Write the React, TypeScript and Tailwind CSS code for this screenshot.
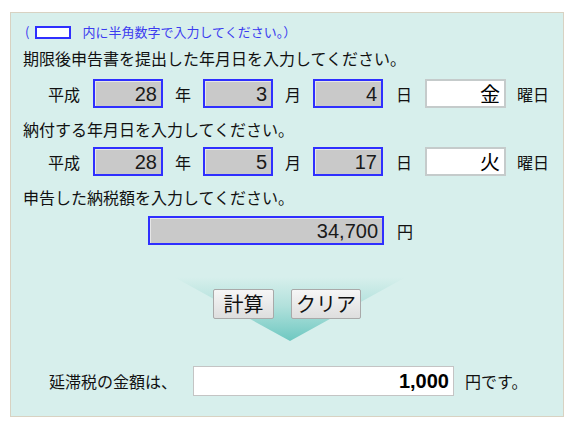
const jp = { fontFamily: '"Noto Sans CJK JP", "Liberation Sans", sans-serif' };
const num = { fontFamily: '"Liberation Sans", Arial, sans-serif' };

function NumBox({ value, width = 'w-[70px]' }: { value: string; width?: string }) {
	return (
		<div className={`${width} h-[29px] border-2 border-[#2f2fff] bg-[#c9c9c9] shadow-[inset_1px_1px_0_#e6e6e6] flex items-center justify-end pr-[4px] text-[20px] text-[#1a1a1a]`} style={num}>
			{value}
		</div>
	);
}

function DayBox({ value }: { value: string }) {
	return (
		<div className="w-[81px] h-[29px] border-2 border-[#c5cbcb] bg-white flex items-center justify-end pr-[4px] text-[20px] text-black" style={jp}>
			{value}
		</div>
	);
}

function DateRow({ y, m, d, w }: { y: string; m: string; d: string; w: string }) {
	return (
		<div className="flex items-center h-[29px] text-[16px] text-[#111]">
			<div className="w-[82px] pl-[37px]">平成</div>
			<NumBox value={y} />
			<div className="w-[40px] text-center">年</div>
			<NumBox value={m} />
			<div className="w-[40px] text-center">月</div>
			<NumBox value={d} />
			<div className="w-[42px] text-center">日</div>
			<DayBox value={w} />
			<div className="ml-[11px]">曜日</div>
		</div>
	);
}

export default function App() {
	return (
		<div className="w-[574px] h-[427px] bg-white pt-[12px] pl-[10px]" style={jp}>
			<div className="w-[554px] h-[405px] border border-[#d8d2c2] bg-[#d7efec] flex flex-col">
				<div className="h-[20px] mt-[9px] ml-[14px] flex items-center text-[13px] text-[#3b3bf0]">
					<span>(</span>
					<span className="w-[36px] h-[13px] border-2 border-[#2f2fff] bg-white ml-[6px]" />
					<span className="ml-[11px]">内に半角数字で入力してください。）</span>
				</div>
				<div className="h-[22px] mt-[5px] ml-[12px] flex items-center text-[16px] text-[#111]">期限後申告書を提出した年月日を入力してください。</div>
				<div className="mt-[10px]">
					<DateRow y="28" m="3" d="4" w="金" />
				</div>
				<div className="h-[22px] mt-[10px] ml-[12px] flex items-center text-[16px] text-[#111]">納付する年月日を入力してください。</div>
				<div className="mt-[7px]">
					<DateRow y="28" m="5" d="17" w="火" />
				</div>
				<div className="h-[22px] mt-[10px] ml-[12px] flex items-center text-[16px] text-[#111]">申告した納税額を入力してください。</div>
				<div className="mt-[8px] flex items-center h-[29px] text-[16px] text-[#111]">
					<div className="ml-[137px]">
						<NumBox value="34,700" width="w-[236px]" />
					</div>
					<div className="ml-[13px]">円</div>
				</div>
				<div className="relative h-[108px] mt-[7px]">
					<svg className="absolute left-[163px] top-[25px]" width="232" height="70" viewBox="0 0 232 70">
						<defs>
							<linearGradient id="fun" x1="0" y1="0" x2="0" y2="1">
								<stop offset="0" stopColor="#d7efec" />
								<stop offset="0.45" stopColor="#b2e1dc" />
								<stop offset="1" stopColor="#6ec8c1" />
							</linearGradient>
						</defs>
						<polygon points="0,0 232,0 116,64" fill="url(#fun)" />
					</svg>
					<div className="relative flex pt-[37px] pl-[202px] gap-[17px]">
						<button className="w-[61px] h-[30px] rounded-[2px] border border-[#a9a9a9] bg-gradient-to-b from-[#f6f6f6] to-[#dedede] text-[20px] leading-none text-[#111] flex items-center justify-center" style={jp}>計算</button>
						<button className="w-[70px] h-[30px] rounded-[2px] border border-[#a9a9a9] bg-gradient-to-b from-[#f6f6f6] to-[#dedede] text-[20px] leading-none text-[#111] flex items-center justify-center" style={jp}>クリア</button>
					</div>
				</div>
				<div className="flex items-center h-[30px] text-[16px] text-[#111] mt-[6px]">
					<div className="ml-[38px] w-[144px]">延滞税の金額は、</div>
					<div className="w-[261px] h-[30px] border border-[#c4c4c4] bg-white flex items-center justify-end pr-[4px] text-[20px] font-bold text-black" style={num}>1,000</div>
					<div className="ml-[11px]">円です。</div>
				</div>
			</div>
		</div>
	);
}
